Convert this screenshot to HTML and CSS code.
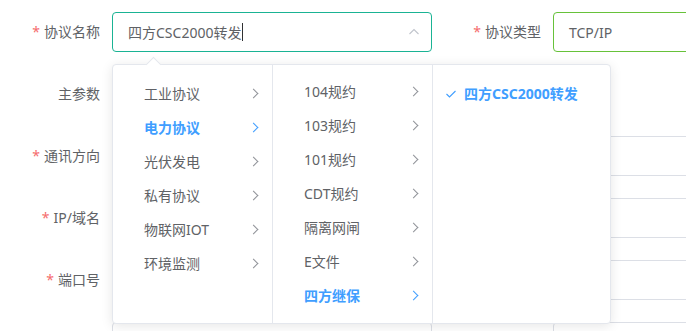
FILE: index.html
```html
<!DOCTYPE html>
<html lang="zh">
<head>
<meta charset="utf-8">
<link rel="stylesheet" href="styles.css">
</head>
<body>
<form class="form">
  <div class="row">
    <div class="item">
      <label class="label"><span class="req">*</span>协议名称</label>
      <div class="control">
        <div class="input is-focus">
          <span class="value">四方CSC2000转发</span><span class="caret"></span>
          <svg class="chev-up" width="12" height="12" viewBox="0 0 12 12"><path d="M1.5 8 L6 3.5 L10.5 8" fill="none" stroke="#c0c4cc" stroke-width="1.1"/></svg>
        </div>
        <div class="dropdown">
          <div class="arrow"></div>
          <ul class="menu m1">
            <li class="node">工业协议<i class="chev"></i></li>
            <li class="node active">电力协议<i class="chev"></i></li>
            <li class="node">光伏发电<i class="chev"></i></li>
            <li class="node">私有协议<i class="chev"></i></li>
            <li class="node">物联网IOT<i class="chev"></i></li>
            <li class="node">环境监测<i class="chev"></i></li>
          </ul>
          <ul class="menu m2">
            <li class="node">104规约<i class="chev"></i></li>
            <li class="node">103规约<i class="chev"></i></li>
            <li class="node">101规约<i class="chev"></i></li>
            <li class="node">CDT规约<i class="chev"></i></li>
            <li class="node">隔离网闸<i class="chev"></i></li>
            <li class="node">E文件<i class="chev"></i></li>
            <li class="node active">四方继保<i class="chev"></i></li>
          </ul>
          <ul class="menu m3">
            <li class="node checked"><svg class="check" width="12" height="12" viewBox="0 0 12 12"><path d="M1.5 6 L4.5 9 L10.5 3" fill="none" stroke="#409eff" stroke-width="1.1"/></svg>四方CSC2000转发</li>
          </ul>
        </div>
      </div>
    </div>
    <div class="item">
      <label class="label"><span class="req">*</span>协议类型</label>
      <div class="control"><div class="input is-success"><span class="value">TCP/IP</span></div></div>
    </div>
  </div>
  <div class="row">
    <div class="item">
      <label class="label">主参数</label>
      <div class="control"><div class="input"></div></div>
    </div>
  </div>
  <div class="row">
    <div class="item">
      <label class="label"><span class="req">*</span>通讯方向</label>
      <div class="control"><div class="input"></div></div>
    </div>
    <div class="item">
      <label class="label"></label>
      <div class="control"><div class="input"></div></div>
    </div>
  </div>
  <div class="row">
    <div class="item">
      <label class="label"><span class="req">*</span>IP/域名</label>
      <div class="control"><div class="input"></div></div>
    </div>
    <div class="item">
      <label class="label"></label>
      <div class="control"><div class="input"></div></div>
    </div>
  </div>
  <div class="row">
    <div class="item">
      <label class="label"><span class="req">*</span>端口号</label>
      <div class="control"><div class="input"></div></div>
    </div>
    <div class="item">
      <label class="label"></label>
      <div class="control"><div class="input"></div></div>
    </div>
  </div>
  <div class="row">
    <div class="item">
      <label class="label"></label>
      <div class="control"><div class="input"></div></div>
    </div>
    <div class="item">
      <label class="label"></label>
      <div class="control"><div class="input"></div></div>
    </div>
  </div>
</form>
</body>
</html>
```

FILE: styles.css
```css
html, body {
  margin: 0;
  padding: 0;
  background: #fff;
  overflow: hidden;
}
body {
  font-family: "Noto Sans", "Noto Sans CJK SC", sans-serif;
  font-size: 14px;
  color: #606266;
  width: 686px;
  height: 331px;
}
.form {
  padding-top: 12px;
}
.row {
  display: flex;
  gap: 9px;
  margin-bottom: 22px;
  height: 40px;
}
.item {
  display: flex;
  flex: none;
}
.label {
  width: 112px;
  box-sizing: border-box;
  padding-right: 12px;
  text-align: right;
  line-height: 40px;
  color: #606266;
  white-space: nowrap;
}
.req {
  color: #f56c6c;
  margin-right: 4px;
}
.control {
  position: relative;
  width: 320px;
}
.input {
  box-sizing: border-box;
  height: 40px;
  border: 1px solid #dcdfe6;
  border-radius: 4px;
  padding: 0 15px;
  display: flex;
  align-items: center;
  background: #fff;
}
.input.is-focus { border-color: #1ab394; }
.input.is-success { border-color: #67c23a; }
.value { white-space: nowrap; }
.caret {
  display: inline-block;
  width: 0;
  height: 18px;
  border-left: 1px solid #303133;
  margin-left: 1px;
}
.chev-up {
  margin-left: auto;
  margin-right: -4px;
}
.dropdown {
  position: absolute;
  top: 52px;
  left: 0;
  z-index: 10;
  display: flex;
  background: #fff;
  border: 1px solid #e4e7ed;
  border-radius: 4px;
  box-shadow: 0 2px 12px 0 rgba(0,0,0,0.1);
  height: 260px;
  box-sizing: border-box;
}
.arrow {
  position: absolute;
  top: -6px;
  left: 35px;
  width: 10px;
  height: 10px;
  background: #fff;
  border-left: 1px solid #e4e7ed;
  border-top: 1px solid #e4e7ed;
  transform: rotate(45deg);
}
.menu {
  list-style: none;
  margin: 0;
  box-sizing: border-box;
  border-right: 1px solid #e4e7ed;
}
.m1 { width: 160px; padding: 12px 0 6px; }
.m2 { width: 160px; padding: 10px 0 6px; }
.m3 { width: 177px; padding: 12px 0 6px; border-right: none; }
.node {
  position: relative;
  height: 34px;
  line-height: 34px;
  padding: 0 30px 0 31px;
  color: #606266;
  white-space: nowrap;
}
.node.active {
  color: #409eff;
  font-weight: bold;
}
.chev {
  position: absolute;
  right: 15px;
  top: 13px;
  width: 6px;
  height: 6px;
  border-right: 1px solid #909399;
  border-top: 1px solid #909399;
  transform: rotate(45deg);
}
.node.active .chev { border-color: #409eff; }
.node.checked {
  color: #409eff;
  font-weight: bold;
  padding-left: 31px;
}
.check {
  position: absolute;
  left: 12px;
  top: 11px;
}
```
